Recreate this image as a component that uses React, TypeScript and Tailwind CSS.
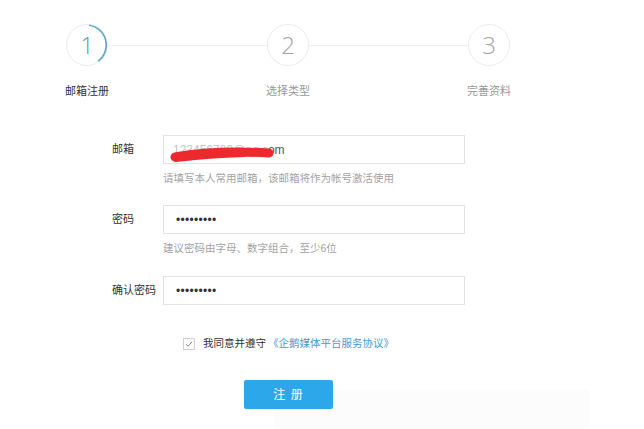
import React from 'react';

const FONT = '"Liberation Sans", "Noto Sans CJK SC", sans-serif';

function StepCircle({ n, active }: { n: number; active?: boolean }) {
    return (
        <div className="relative w-[42px] h-[42px] rounded-full border border-[#ececec] bg-white flex items-center justify-center">
            <span
                className={`text-[24px] leading-none font-light ${active ? 'text-[#5a9fb4]' : 'text-[#a3a3a3]'}`}
                style={{ fontFamily: '"Open Sans", "Liberation Sans", sans-serif' }}
            >
                {n}
            </span>
            {active && (
                <svg className="absolute -inset-px" width="42" height="42" viewBox="0 0 42 42">
                    <path d="M23 1.2 A20 20 0 0 1 32 37.2" fill="none" stroke="#5fa9c4" strokeWidth="1.6" />
                </svg>
            )}
        </div>
    );
}

function Step({ n, label, active }: { n: number; label: string; active?: boolean }) {
    return (
        <div className="w-[42px] flex flex-col items-center">
            <StepCircle n={n} active={active} />
            <span className={`mt-[19px] text-[11px] leading-[12px] whitespace-nowrap ${active ? 'text-[#333]' : 'text-[#999]'}`}>
                {label}
            </span>
        </div>
    );
}

function Field({ label, children }: { label: string; children: React.ReactNode }) {
    return (
        <div className="flex items-center">
            <span className="w-[51px] text-[11px] text-[#333]">{label}</span>
            <div className="relative w-[302px] h-[29px] border border-[#e3e3e3] bg-white flex items-center">
                {children}
            </div>
        </div>
    );
}

export default function App() {
    return (
        <div className="relative w-[644px] h-[429px] bg-white overflow-hidden" style={{ fontFamily: FONT }}>
            {/* faint panel at the bottom */}
            <div className="absolute left-[275px] top-[390px] w-[314px] h-[39px] bg-[#fcfcfc]" />

            <div className="relative flex items-start pl-[66px] pt-[24px]">
                <Step n={1} label="邮箱注册" active />
                <div className="w-[159px] h-px mt-[21px] bg-[#efefef]" />
                <Step n={2} label="选择类型" />
                <div className="w-[159px] h-px mt-[21px] bg-[#efefef]" />
                <Step n={3} label="完善资料" />
            </div>

            <div className="relative pl-[112px] mt-[38px] flex flex-col">
                <Field label="邮箱">
                    <span className="pl-[9px] text-[12px] text-[#555]">
                        <span className="text-[#c4c4c4]">123456789@qq.c</span>om
                    </span>
                    <svg className="absolute left-0 top-0" width="130" height="29" viewBox="0 0 130 29">
                        <path d="M11 21 Q 50 14 105 17" fill="none" stroke="#ec2a2e" strokeWidth="9" strokeLinecap="round" />
                        <path d="M12 23 Q 45 19 80 18" fill="none" stroke="#ec2a2e" strokeWidth="6" strokeLinecap="round" />
                    </svg>
                </Field>
                <p className="ml-[51px] mt-[7px] h-[14px] leading-[14px] text-[10.5px] text-[#a3a3a3]">
                    请填写本人常用邮箱，该邮箱将作为帐号激活使用
                </p>

                <div className="mt-[20px]">
                    <Field label="密码">
                        <span className="pl-[12px] text-[12px] text-[#333] tracking-[0.3px]">•••••••••</span>
                    </Field>
                </div>
                <p className="ml-[51px] mt-[7px] h-[14px] leading-[14px] text-[10.5px] text-[#a3a3a3]">
                    建议密码由字母、数字组合，至少6位
                </p>

                <div className="mt-[21px]">
                    <Field label="确认密码">
                        <span className="pl-[12px] text-[12px] text-[#333] tracking-[0.3px]">•••••••••</span>
                    </Field>
                </div>

                <label className="ml-[71px] mt-[32px] h-[14px] flex items-center text-[10.5px]">
                    <span className="w-[12px] h-[12px] border border-[#cfcfcf] flex items-center justify-center">
                        <svg width="8" height="8" viewBox="0 0 8 8">
                            <path d="M1 4.2 L3.2 6.2 L7 1.8" fill="none" stroke="#888" strokeWidth="1" />
                        </svg>
                    </span>
                    <span className="ml-[8px] text-[#333]">我同意并遵守</span>
                    <span className="ml-[2px] text-[#3f9ad6]">《企鹅媒体平台服务协议》</span>
                </label>

                <button className="ml-[132px] mt-[29px] w-[89px] h-[29px] rounded-[2px] bg-[#2ca8ea] text-white text-[12px] tracking-[1px]">
                    注 册
                </button>
            </div>
        </div>
    );
}
